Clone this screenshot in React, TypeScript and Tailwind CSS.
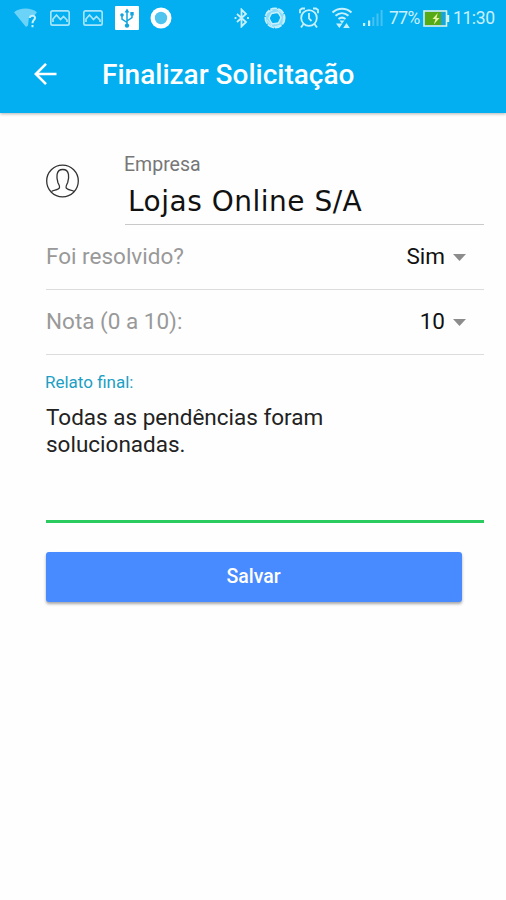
import React from 'react';

// ===== FORM DATA =====
const fields = [
  { id: 'resolved', label: 'Foi resolvido?', value: 'Sim' },
  { id: 'score', label: 'Nota (0 a 10):', value: '10' },
];

const PictureIcon: React.FC = () => (
  <svg className="w-5 h-4 text-[#a5e5fb]" viewBox="0 0 20 16" fill="none" stroke="currentColor" strokeWidth="1.7">
    <rect x="0.8" y="0.8" width="18.4" height="14.4" rx="2" />
    <path d="M3 12V9l3.5-4 4 4.5L13.5 6.5 17 10v2" />
  </svg>
);

const StatusBar: React.FC = () => (
  <div className="flex h-9 items-center pl-3.5 text-[#c9f0fd]">
    {/* Wifi with question mark */}
    <svg className="mr-3 h-5 w-6" viewBox="0 0 24 20">
      <path d="M0 4.2C6-.8 17-.8 23 4.2L20.5 7.5C17 6 14.5 8 14.8 11l-.8 6.5-2 1.5z" fill="#6bd2f8" />
      <path d="M15.8 10c.3-3.2 5.7-3 5.2.2-.3 2-2.5 2-2.5 5M18.5 17v2.2" fill="none" stroke="#c9f0fd" strokeWidth="2" />
    </svg>
    <PictureIcon />
    <div className="ml-[13px]">
      <PictureIcon />
    </div>

    {/* USB */}
    <svg className="ml-3 h-6 w-6" viewBox="0 0 24 24">
      <rect width="24" height="24" rx="1" fill="#fff" />
      <path d="M12 19V6M12 16.5l-5-3.5v-3M12 15l5-3.5V8" fill="none" stroke="#12a5dd" strokeWidth="1.5" />
      <path d="M12 2.5l2.4 4H9.6zM15.3 6h3.4v3.4h-3.4z" fill="#12a5dd" />
      <circle cx="7" cy="9" r="1.8" fill="#12a5dd" />
      <circle cx="12" cy="19.6" r="2.2" fill="#12a5dd" />
    </svg>

    {/* Record */}
    <svg className="ml-[11px] h-[22px] w-[22px]" viewBox="0 0 22 22">
      <circle cx="11" cy="11" r="10.5" fill="#fff" />
      <circle cx="11" cy="11" r="6.2" fill="#4fc4ef" />
    </svg>

    {/* Bluetooth */}
    <svg className="ml-[62px] h-5 w-4" viewBox="0 0 16 20" fill="none" stroke="currentColor" strokeWidth="1.8">
      <path d="M3 6l9 8-4.5 4.5v-17L12 6l-9 8" />
      <path d="M1.5 9v2M14 9v2" />
    </svg>

    {/* Shutter ring */}
    <svg className="ml-[13px] h-[22px] w-6" viewBox="0 0 24 22" fill="none" stroke="currentColor">
      <circle cx="12" cy="11" r="7.5" stroke="#8bdcf9" strokeWidth="4.4" />
      <circle cx="12" cy="11" r="9.8" strokeWidth="1.5" strokeDasharray="7 1.2" />
      <path d="M8.5 6.5L15 5.2l3 5.3-2.5 5.5-6.500 1L6 11.200z" strokeWidth="1.4" />
      <path d="M3.5 6l6-3M14 2l6 5M20.500 9l-.5 7M18 18l-7 2M9 19l-5-6" strokeWidth="1" />
    </svg>

    {/* Alarm */}
    <svg className="ml-3 h-[22px] w-5" viewBox="0 0 20 22" fill="none" stroke="currentColor" strokeWidth="1.8">
      <circle cx="10" cy="11" r="7.8" />
      <path d="M10 6v5.5l2.5 2.5M1 6.2V3l2-1.5h3M19 6.2V3l-2-1.5h-3M4.5 17L2 20.5M15.5 17l2.5 3.5" />
    </svg>

    {/* Wifi with transfer arrows */}
    <svg className="ml-3 h-[22px] w-[22px]" viewBox="0 0 22 22" fill="none" stroke="currentColor" strokeWidth="2">
      <path d="M1.5 5.5c5.5-5 13.5-5 19 0M4.5 8.8c4-3.5 9-3.5 13 0M7.5 12c2.3-1.8 4.7-1.8 7 0" />
      <path d="M8.500 13.500h5l-2.500 3zM5 16.500h6.500l-3.200 4.500zM15.500 16l3.300 5h-6.600z" fill="currentColor" stroke="none" />
    </svg>

    {/* Signal */}
    <svg className="ml-[10px] h-[18px] w-5" viewBox="0 0 20 18" fill="currentColor">
      <path d="M0 14h2.2v3H0zM5 11.5h2.2V17H5z" />
      <path d="M9.3 8h2v9h-2zM13.5 4.5h2V17h-2zM17.6 1h2v16h-2z" fill="#45c2f3" />
    </svg>

    <span className="ml-[6px] w-[33px] whitespace-nowrap pt-px text-[17.5px] tracking-[-0.6px]">77%</span>

    {/* Battery */}
    <svg className="ml-px h-[17px] w-[27px]" viewBox="0 0 27 17">
      <rect x="1" y="1" width="22.5" height="15" fill="#16a6dc" stroke="#d6f1e6" strokeWidth="1.6" />
      <path d="M2 2h16v13H2z" fill="#55aa15" />
      <path d="M24 5h2.2v7H24z" fill="#d6f1e6" />
      <path d="M14.8 3L9.5 9h3l-1.7 5.5L16.5 8h-3z" fill="#e4f3a5" />
    </svg>
    <span className="ml-[3px] whitespace-nowrap pt-px text-[17.5px] tracking-[-0.4px]">11:30</span>
  </div>
);

const App: React.FC = () => {
  return (
    <div className="h-[900px] w-[506px] overflow-hidden bg-[#fefefe] font-['Roboto',sans-serif]">
      {/* App Bar */}
      <header className="h-[113px] bg-[#03aff0] shadow-[0_1px_3px_rgba(0,0,0,0.3)]">
        <StatusBar />
        <div className="flex h-[76px] items-center pl-[34px] text-white">
          <button aria-label="Voltar">
            <svg className="h-6 w-6" viewBox="0 0 24 24" fill="none" stroke="currentColor" strokeWidth="2.6">
              <path d="M22.5 12H2M12 1.8L1.8 12 12 22.2" />
            </svg>
          </button>
          <h1 className="ml-11 whitespace-nowrap pt-px text-[28px] leading-8 font-medium">Finalizar Solicitação</h1>
        </div>
      </header>

      <main className="pr-[22px] pl-[46px]">
        {/* Company */}
        <div className="flex h-28">
          <svg className="mt-[51px] h-[34px] w-[34px] text-[#333]" viewBox="0 0 34 34" fill="none" stroke="currentColor" strokeWidth="1.3">
            <circle cx="16.5" cy="17" r="15.8" />
            <path d="M5.5 27.5c2-1.7 7-1.2 8-3.7.6-1.6-.8-3.200-1.600-5.300C10.500 14 9.500 5.500 16.800 5.500S23 14 21.700 18.500c-.8 2.100-2.200 3.700-1.600 5.300 1 2.500 6 2 8 3.700" />
          </svg>
          <div className="ml-[45px] flex-1 border-b border-[#c9c9c9] pt-10">
            <label className="-ml-px block text-[19.5px] leading-6 text-[#777]">Empresa</label>
            <p className="pl-[3px] font-['DejaVu_Sans',sans-serif] text-[28px] leading-[50px] tracking-[0.5px] whitespace-nowrap text-[#111]">
              Lojas Online S/A
            </p>
          </div>
        </div>

        {/* Selects */}
        {fields.map(field => (
          <div
            key={field.id}
            className="flex h-[65px] items-center justify-between border-b border-[#dcdcdc] pr-[18px] text-[22.5px]"
          >
            <span className="text-[#999]">{field.label}</span>
            <button className="flex items-center text-[#111]">
              {field.value}
              <svg className="ml-[8px] h-[7px] w-[13px] text-[#8c8c8c]" viewBox="0 0 13 7" fill="currentColor">
                <path d="M0 0h13L6.5 7z" />
              </svg>
            </button>
          </div>
        ))}

        {/* Report */}
        <div className="h-[168px] border-b-[3px] border-[#2bcb5f] pt-[17px]">
          <label className="-ml-px block text-[17px] leading-5 text-[#1c9fc4]">Relato final:</label>
          <p className="mt-3 text-[22.5px] leading-[27px] text-[#222]">
            Todas as pendências foram
            <br />
            solucionadas.
          </p>
        </div>

        <button className="mt-[29px] block h-[50px] w-[416px] rounded-[3px] bg-[#488aff] pr-px text-[19.5px] font-medium text-white shadow-[0_2px_3px_rgba(0,0,0,0.35)]">
          Salvar
        </button>
      </main>
    </div>
  );
};

export default App;
